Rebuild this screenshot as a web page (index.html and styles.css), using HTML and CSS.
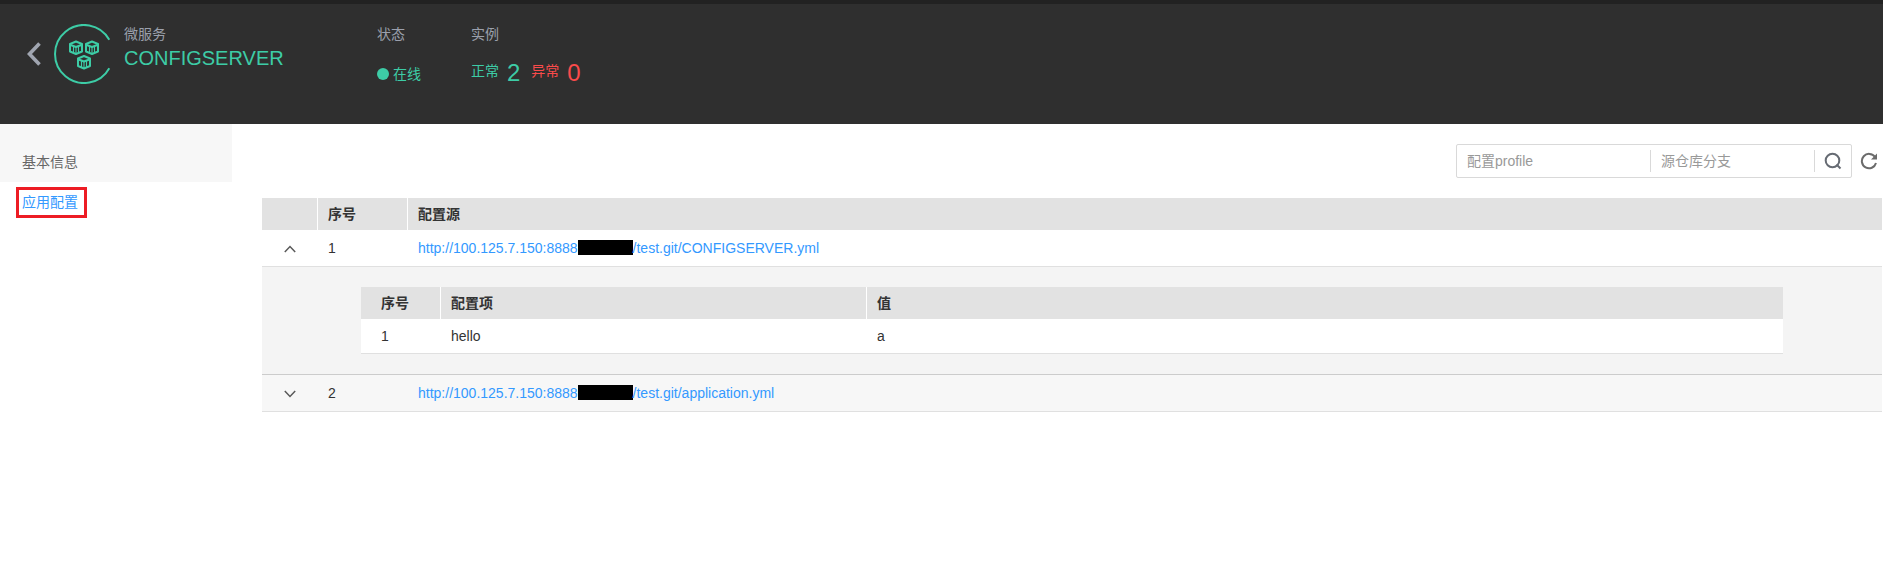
FILE: index.html
```html
<!DOCTYPE html>
<html lang="zh-CN">
<head>
<meta charset="utf-8">
<title>CONFIGSERVER</title>
<link rel="stylesheet" href="styles.css">
</head>
<body>
<header class="banner">
  <button class="icon-button back" type="button" aria-label="返回">
    <svg width="14" height="24" viewBox="0 0 14 24"><path d="M12.5 1.5 2.5 12l10 10.5" fill="none" stroke="#a0a5b0" stroke-width="3.6"/></svg>
  </button>
  <svg class="logo" width="60" height="60" viewBox="0 0 60 60" fill="none" stroke="#3dcca6" aria-hidden="true">
    <path d="M55.3 15.8A29 29 0 1 0 55.3 44.2" stroke-width="2"/>
    <defs>
      <g id="cube" stroke-linejoin="round">
        <path d="M7 1 13 3.500v7.500L7 13.500 1 11V3.500z" stroke-width="2"/>
        <path d="M1 4.200 7 6.500l6-2.300" stroke-width="2"/>
        <path d="M4.500 6v6M7 6.500V13M9.500 6v6" stroke-width="1.100"/>
      </g>
    </defs>
    <use href="#cube" x="15" y="16.500"/>
    <use href="#cube" x="31" y="16.500"/>
    <use href="#cube" x="23" y="31"/>
  </svg>
  <div class="identity">
    <div class="caption">微服务</div>
    <h1 class="service">CONFIGSERVER</h1>
  </div>
  <div class="fact status">
    <div class="caption">状态</div>
    <div class="online"><span class="dot"></span>在线</div>
  </div>
  <div class="fact">
    <div class="caption">实例</div>
    <div class="counts">
      <span class="good">正常</span><span class="number good">2</span>
      <span class="bad label-bad">异常</span><span class="number bad">0</span>
    </div>
  </div>
</header>
<div class="layout">
  <nav class="sidebar">
    <a class="nav-item" href="#info">基本信息</a>
    <a class="nav-item current" href="#config"><span class="mark">应用配置</span></a>
  </nav>
  <main class="content">
    <form class="toolbar">
      <div class="search">
        <input class="field profile" type="text" placeholder="配置profile" aria-label="配置profile">
        <input class="field branch" type="text" placeholder="源仓库分支" aria-label="源仓库分支">
        <button class="icon-button find" type="button" aria-label="搜索">
          <svg width="18" height="18" viewBox="0 0 18 18" fill="none" stroke="#666b73" stroke-width="2"><circle cx="8.500" cy="8.500" r="6.800"/><path d="m12.500 12.500 4 4"/></svg>
        </button>
      </div>
      <button class="icon-button refresh" type="button" aria-label="刷新">
        <svg width="18" height="18" viewBox="0 0 18 18"><path d="M15 5A7.200 7.200 0 1 0 16 11" fill="none" stroke="#6b6b6b" stroke-width="2"/><path d="M17 1.500v6h-6z" fill="#6b6b6b"/></svg>
      </button>
    </form>
    <table class="grid sources">
      <thead>
        <tr><th class="col-toggle"></th><th class="col-index">序号</th><th>配置源</th></tr>
      </thead>
      <tbody>
        <tr class="row">
          <td class="toggle"><button class="icon-button" type="button" aria-label="收起"><svg width="12" height="8" viewBox="0 0 12 8"><path d="m.8 7 5.200-5.500L11.200 7" fill="none" stroke="#595959" stroke-width="1.500"/></svg></button></td>
          <td>1</td>
          <td><a class="link" href="#configserver">http://100.125.7.150:8888<span class="redacted"></span>/test.git/CONFIGSERVER.yml</a></td>
        </tr>
        <tr class="detail">
          <td colspan="3">
            <table class="grid items">
              <thead>
                <tr><th class="col-number">序号</th><th class="col-key">配置项</th><th>值</th></tr>
              </thead>
              <tbody>
                <tr><td>1</td><td>hello</td><td>a</td></tr>
              </tbody>
            </table>
          </td>
        </tr>
        <tr class="row shaded">
          <td class="toggle"><button class="icon-button" type="button" aria-label="展开"><svg width="12" height="8" viewBox="0 0 12 8"><path d="m.8 1 5.200 5.500L11.200 1" fill="none" stroke="#595959" stroke-width="1.500"/></svg></button></td>
          <td>2</td>
          <td><a class="link" href="#application">http://100.125.7.150:8888<span class="redacted"></span>/test.git/application.yml</a></td>
        </tr>
      </tbody>
    </table>
  </main>
</div>
</body>
</html>
```
FILE: styles.css
```css
* {
  box-sizing: border-box;
}

body {
  margin: 0;
  background: #fff;
  color: #333;
  font: 14px/20px "Liberation Sans", "Noto Sans CJK SC", sans-serif;
}

a {
  text-decoration: none;
}

svg {
  display: block;
}

.icon-button {
  display: inline-flex;
  align-items: center;
  justify-content: center;
  padding: 0;
  border: 0;
  background: none;
  cursor: pointer;
}

/* Service banner */
.banner {
  display: flex;
  align-items: flex-start;
  height: 124px;
  padding: 20px 27px 0;
  border-top: 4px solid #222;
  background: #2f2f2f;
}

.back {
  margin: 18px 13px 0 0;
}

.logo {
  margin-right: 10px;
}

.identity {
  width: 253px;
}

.caption {
  color: #9ba0ac;
}

.service {
  margin: 0;
  color: #3dcca6;
  font-size: 20px;
  font-weight: 400;
  line-height: 28px;
}

.status {
  width: 94px;
}

.online,
.counts {
  display: flex;
  align-items: center;
  height: 24px;
}

.online {
  gap: 4px;
  margin-top: 18px;
  color: #3dcca6;
}

.counts {
  margin-top: 15px;
}

.dot {
  width: 12px;
  height: 12px;
  border-radius: 50%;
  background: #3dcca6;
}

.good {
  color: #3dcca6;
}

.bad {
  color: #fa4b4b;
}

.number {
  margin-left: 8px;
  padding-top: 4px;
  font-size: 24px;
}

.label-bad {
  margin-left: 11px;
}

/* Page body */
.layout {
  display: flex;
  align-items: flex-start;
}

.sidebar {
  flex: 0 0 232px;
}

.nav-item {
  display: block;
  padding: 28px 22px 10px;
  background: #f7f7f7;
  color: #666;
}

.current {
  padding: 5px 16px;
  background: none;
  color: #3399ff;
}

.mark {
  display: inline-block;
  padding: 2px 6px 3px 3px;
  border: 3px solid #ed1c24;
}

.content {
  flex: 1;
  min-width: 0;
  padding: 20px 1px 0 30px;
}

.toolbar {
  display: flex;
  justify-content: flex-end;
  gap: 8px;
  padding-right: 4px;
}

.search {
  display: flex;
  align-items: center;
  height: 34px;
  border: 1px solid #d9d9d9;
  border-radius: 2px;
}

.field {
  height: 22px;
  padding: 0 10px;
  border: 0;
  border-right: 1px solid #d9d9d9;
  background: none;
  color: #333;
  font: inherit;
  outline: 0;
}

.field::placeholder {
  color: #999;
}

.profile {
  width: 194px;
}

.branch {
  width: 164px;
}

.find {
  width: 36px;
  height: 32px;
}

/* Tables */
.grid {
  width: 100%;
  border-collapse: separate;
  border-spacing: 0;
  table-layout: fixed;
}

.grid th {
  height: 32px;
  padding: 0 10px;
  border-left: 1px solid #fff;
  background: #e2e2e2;
  text-align: left;
  font-weight: 700;
}

.grid th:first-child {
  border-left: 0;
}

.grid td {
  padding: 0 11px;
  border-bottom: 1px solid #e0e0e0;
}

.sources {
  margin-top: 20px;
}

.col-toggle {
  width: 55px;
}

.col-index {
  width: 90px;
}

.row td {
  height: 37px;
}

.row .toggle {
  padding: 0;
  text-align: center;
}

.toggle .icon-button {
  vertical-align: middle;
}

.shaded td {
  background: #f7f7f7;
}

.grid .detail > td {
  padding: 20px 99px;
  border-bottom-color: #ccc;
  background: #f4f4f4;
}

.items .col-number {
  width: 79px;
  padding-left: 20px;
}

.col-key {
  width: 426px;
}

.items td {
  height: 35px;
  background: #fff;
}

.items td:first-child {
  padding-left: 20px;
}

.link {
  color: #3399ff;
}

.redacted {
  display: inline-block;
  width: 55px;
  height: 15px;
  background: #000;
  vertical-align: -2px;
}
```
